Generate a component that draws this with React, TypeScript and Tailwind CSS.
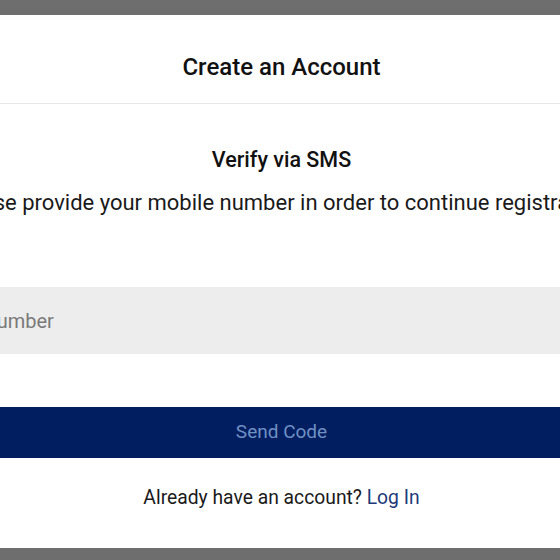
export default function App() {
  return (
    <div className="w-[560px] h-[560px] overflow-hidden bg-[#6e6e6e] pt-[15px] pb-[12px] flex flex-col" style={{ fontFamily: "Roboto, 'Liberation Sans', sans-serif" }}>
      {/* modal is wider than the viewport, so it spills over both edges */}
      <div className="ml-[-100px] w-[763px] h-full shrink-0 bg-white flex flex-col">
        <header className="h-[89px] pt-[16px] flex items-center justify-center border-b border-[#e6e6e6]">
          <h1 className="text-[24px] font-medium text-[#111111]">Create an Account</h1>
        </header>

        <div className="flex flex-col items-center pt-[43px]">
          <h2 className="text-[21.5px] font-medium text-[#111111] leading-[26px]">Verify via SMS</h2>
          <p className="mt-[16px] text-[22px] text-[#1a1a1a] leading-[28px] whitespace-nowrap">
            Please provide your mobile number in order to continue registration.
          </p>

          <input
            type="tel"
            placeholder="Mobile Number"
            className="mt-[70px] w-full h-[67px] bg-[#ededed] px-[17px] text-[20px] text-[#222] placeholder:text-[#7a7a7a] outline-none"
          />

          <button className="mt-[53px] w-full h-[51px] bg-[#001e60] text-[19px] text-[#7190c4]">
            Send Code
          </button>

          <div className="mt-[28px] text-[19.3px] text-[#1a1a1a] leading-[24px]">
            Already have an account? <a href="#" className="text-[#1e3a78]">Log In</a>
          </div>
        </div>
      </div>
    </div>
  );
}
